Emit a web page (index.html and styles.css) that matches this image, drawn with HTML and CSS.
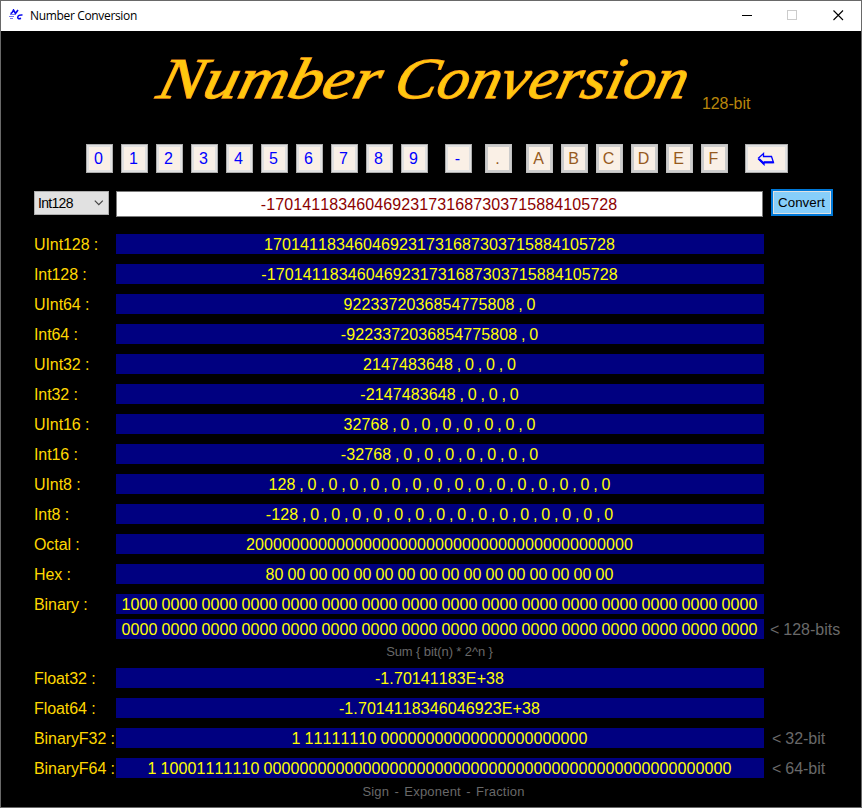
FILE: index.html
```html
<!DOCTYPE html>
<html lang="en">
<head>
<meta charset="utf-8">
<title>Number Conversion</title>
<link rel="stylesheet" href="styles.css">
</head>
<body>
<div class="window">
  <header class="titlebar">
    <svg class="app-icon" width="16" height="14" viewBox="0 0 16 14" fill="none" stroke="#0808f0">
      <path d="M1.500 4.500Q3 4.500 4.500 1L6.500 4.500L9 1" stroke-width="1.600"/>
      <path d="M13.500 6Q9 5.500 8.700 8.500Q9 10.500 12 9.300" stroke-width="1.600"/>
      <path d="M1 5.500H6M0 7.500H5M1 9.500H4" stroke="#7777ee"/>
    </svg>
    <span class="caption">Number Conversion</span>
    <svg class="controls" width="105" height="12" viewBox="0 0 105 12" fill="none">
      <path d="M0 5.500H10" stroke="#000"/>
      <rect x="45.500" y=".5" width="9" height="9" stroke="#ccc"/>
      <path d="M91.500.5L101 10M101 .5L91.500 10" stroke="#000" stroke-width="1.100"/>
    </svg>
  </header>
  <div class="banner">
    <svg class="logo" width="545" height="60" viewBox="0 0 545 60">
      <g transform="translate(0 48) skewX(-14)">
        <text x="4" y="0" textLength="222" lengthAdjust="spacingAndGlyphs">Number</text>
        <text x="241" y="0" textLength="292" lengthAdjust="spacingAndGlyphs">Conversion</text>
      </g>
    </svg>
    <span class="edition">128-bit</span>
  </div>
  <div class="keys">
    <div class="group"><button>0</button><button>1</button><button>2</button><button>3</button><button>4</button><button>5</button><button>6</button><button>7</button><button>8</button><button>9</button></div>
    <button class="minus">-</button>
    <button class="dot off">.</button>
    <div class="group hex"><button class="off">A</button><button class="off">B</button><button class="off">C</button><button class="off">D</button><button class="off">E</button><button class="off">F</button></div>
    <button class="back"><svg width="18" height="14" viewBox="0 0 18 14" fill="none" stroke="#00f"><path d="M1 6.500L6.500 1.500V4.500H14.500L16.500 10.500H7V12.500L1 6.500" stroke-width="1.300"/><path d="M2 7L7 11.500M7 10.300H16.500" stroke-width="2"/></svg></button>
  </div>
  <div class="entry">
    <div class="select"><span>Int128</span><svg width="10" height="6" viewBox="0 0 10 6" fill="none" stroke="#444"><path d="M.8.7L4.800 4.700L8.800.7" stroke-width="1.200"/></svg></div>
    <div class="input">-170141183460469231731687303715884105728</div>
    <button class="convert">Convert</button>
  </div>
  <main class="rows">
    <div class="row"><label>UInt128 :</label><output>170141183460469231731687303715884105728</output></div>
    <div class="row"><label>Int128 :</label><output>-170141183460469231731687303715884105728</output></div>
    <div class="row list"><label>UInt64 :</label><output>9223372036854775808 , 0</output></div>
    <div class="row list"><label>Int64 :</label><output>-9223372036854775808 , 0</output></div>
    <div class="row list"><label>UInt32 :</label><output>2147483648 , 0 , 0 , 0</output></div>
    <div class="row list"><label>Int32 :</label><output>-2147483648 , 0 , 0 , 0</output></div>
    <div class="row list"><label>UInt16 :</label><output>32768 , 0 , 0 , 0 , 0 , 0 , 0 , 0</output></div>
    <div class="row list"><label>Int16 :</label><output>-32768 , 0 , 0 , 0 , 0 , 0 , 0 , 0</output></div>
    <div class="row list"><label>UInt8 :</label><output>128 , 0 , 0 , 0 , 0 , 0 , 0 , 0 , 0 , 0 , 0 , 0 , 0 , 0 , 0 , 0</output></div>
    <div class="row list"><label>Int8 :</label><output>-128 , 0 , 0 , 0 , 0 , 0 , 0 , 0 , 0 , 0 , 0 , 0 , 0 , 0 , 0 , 0</output></div>
    <div class="row"><label>Octal :</label><output>2000000000000000000000000000000000000000000</output></div>
    <div class="row"><label>Hex :</label><output>80 00 00 00 00 00 00 00 00 00 00 00 00 00 00 00</output></div>
    <div class="row joined"><label>Binary :</label><output>1000 0000 0000 0000 0000 0000 0000 0000 0000 0000 0000 0000 0000 0000 0000 0000</output></div>
    <div class="row last"><label></label><output>0000 0000 0000 0000 0000 0000 0000 0000 0000 0000 0000 0000 0000 0000 0000 0000</output><span class="note wide">&lt; 128-bits</span></div>
    <div class="hint">Sum { bit(n) * 2^n }</div>
    <div class="row"><label>Float32 :</label><output>-1.70141183E+38</output></div>
    <div class="row"><label>Float64 :</label><output>-1.7014118346046923E+38</output></div>
    <div class="row"><label>BinaryF32 :</label><output>1 11111110 00000000000000000000000</output><span class="note">&lt; 32-bit</span></div>
    <div class="row last"><label>BinaryF64 :</label><output>1 10001111110 0000000000000000000000000000000000000000000000000000</output><span class="note">&lt; 64-bit</span></div>
    <div class="hint legend">Sign - Exponent - Fraction</div>
  </main>
</div>
</body>
</html>
```
FILE: styles.css
```css
* { box-sizing: border-box; }
body { margin: 0; background: #000; }
.window {
  width: 862px; height: 808px; overflow: hidden;
  border: 1px solid #696969; background: #000;
  font: 16px/20px "Liberation Sans", Arial, sans-serif;
  font-kerning: none;
  letter-spacing: .1px; word-spacing: -.55px;
}
.titlebar { display: flex; align-items: center; height: 30px; padding: 0 14px 0 8px; background: #fff; }
.app-icon { margin-bottom: 1px; }
.caption {
  flex: 1; margin-left: 5px; color: #000; white-space: nowrap;
  font: 12px/16px "Open Sans", sans-serif; letter-spacing: -.34px; word-spacing: 0;
}
.banner { display: flex; height: 113px; padding: 19px 0 0 150px; }
.logo {
  flex: none; overflow: visible; fill: #ffc80e; stroke: #ff8f1f; stroke-width: 1.3; paint-order: stroke;
  font: italic 58px "Liberation Serif", serif; letter-spacing: 0; word-spacing: 0;
}
.edition { margin: 44px 0 0 6px; color: #b8860b; letter-spacing: -.1px; }
button {
  display: flex; align-items: center; justify-content: center; flex: none;
  width: 27px; height: 29px; padding: 0 2px 0 0;
  border: 1px solid #adadad; box-shadow: inset 0 0 0 2px #e1e1e1;
  background: #faf0e6; color: #00f; font: inherit;
}
button.off { border-color: #bfbfbf; box-shadow: inset 0 0 0 2px #ccc; color: #965a1e; }
.keys { display: flex; padding-left: 85px; }
.group { display: flex; gap: 8px; }
.minus { margin-left: 17px; }
.dot { margin-left: 13px; }
.hex { margin-left: 14px; }
.back { width: 43px; margin-left: 17px; }
.entry { display: flex; height: 61px; padding: 16px 0 0 33px; }
.select {
  display: flex; align-items: center; justify-content: space-between;
  width: 75px; height: 24px; margin-top: 2px; padding: 0 4px 0 3px;
  border: 1px solid #adadad; background: #e1e1e1; color: #000;
  font-size: 14px; letter-spacing: -.7px;
}
.input {
  width: 647px; height: 26px; margin: 2px 8px 0 7px; padding-right: 1px;
  border: 1px solid #7a7a7a; background: #fff; color: #8b0000;
  text-align: center; line-height: 25px;
}
.convert {
  width: 62px; height: 27px; padding: 0 1px 0 0; border: 2px solid #0078d7; box-shadow: inset 0 0 0 1px #e1e1e1;
  background: #87cefa; color: #000; font-size: 13.300px; letter-spacing: .05px;
}
.rows { padding-left: 33px; }
.row { display: flex; height: 20px; margin-bottom: 10px; white-space: nowrap; }
.row.joined { margin-bottom: 5px; }
.row.last { margin-bottom: 0; }
.row label { flex: none; width: 82px; color: #ffd700; line-height: 21px; letter-spacing: -.08px; word-spacing: 0; }
.row output { flex: none; width: 648px; padding-right: 1px; background: #000080; color: #ff0; text-align: center; line-height: 21px; }
.list output { word-spacing: -.82px; }
.note { margin-left: 8px; color: #696969; line-height: 21px; letter-spacing: 0; }
.note.wide { margin-left: 6px; }
.hint {
  width: 648px; height: 29px; margin-left: 82px; padding-right: 1px; color: #696969; text-align: center;
  font-size: 13px; line-height: 25px; letter-spacing: -.1px; word-spacing: 0;
}
.legend { padding: 0 0 0 7px; line-height: 27px; letter-spacing: .2px; word-spacing: 1.500px; }
```
